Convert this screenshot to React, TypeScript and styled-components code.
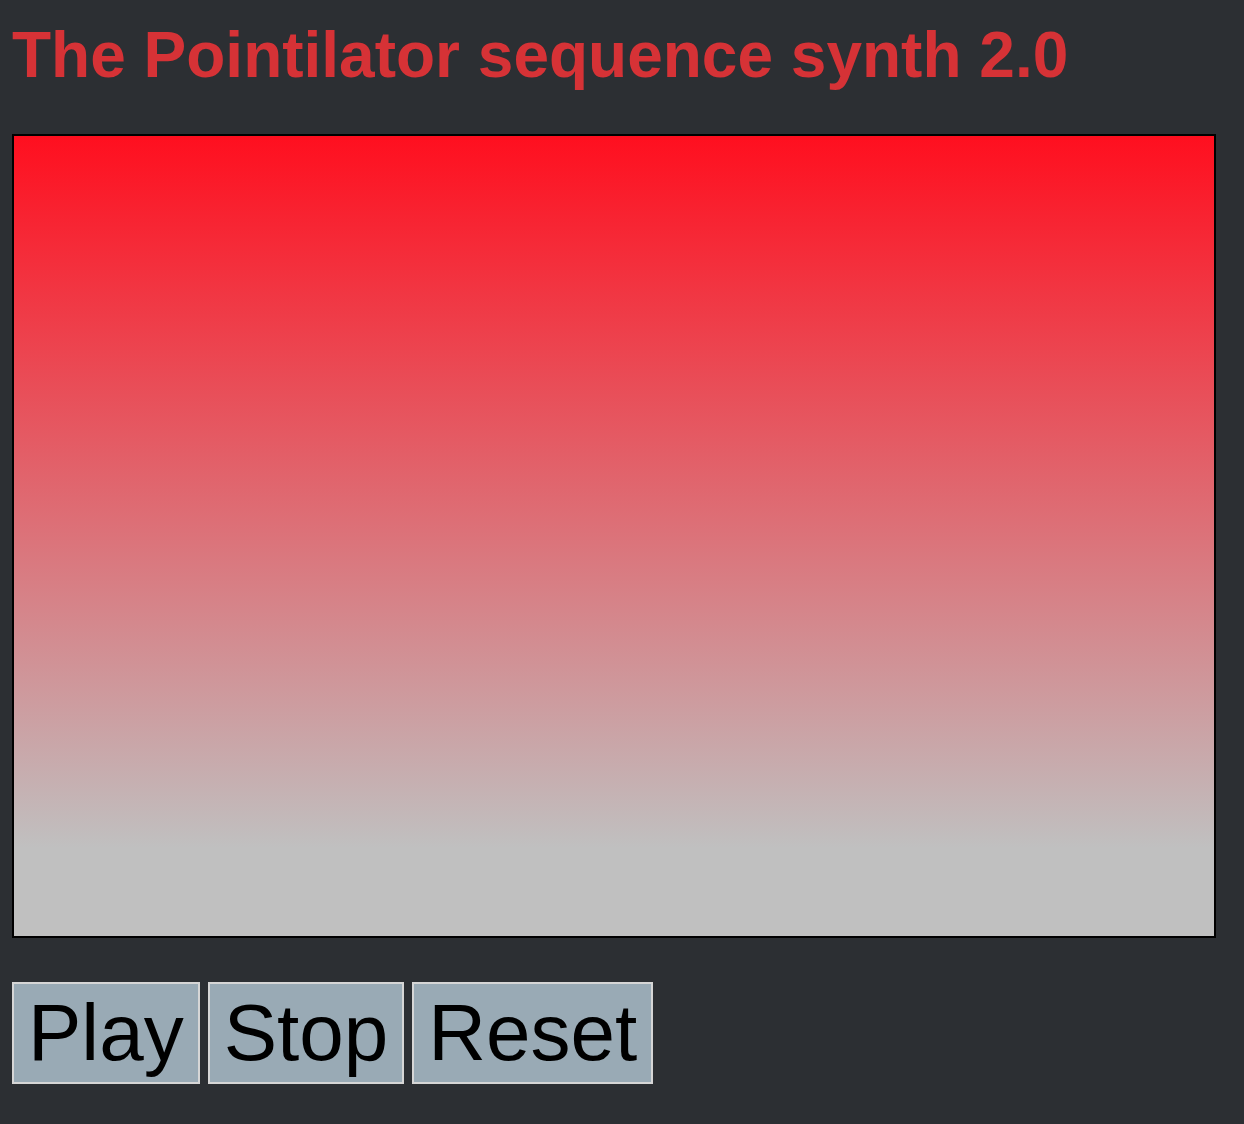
import styled, { createGlobalStyle } from 'styled-components'

const GlobalStyle = createGlobalStyle`
  body {
    margin: 0;
    background-color: #2c2f33;
    font-family: "Liberation Sans", Arial, Helvetica, sans-serif;
  }
`

const Pagina = styled.main`
  padding: 0 12px;
  min-height: 1124px;
  box-sizing: border-box;
`

const Titulo = styled.h1`
  margin: 19px 0 43px;
  font-size: 64px;
  line-height: 72px;
  font-weight: 700;
  color: #d63236;
  white-space: nowrap;
`

const Tela = styled.div`
  width: 1200px;
  height: 800px;
  border: 2px solid #000;
  background: linear-gradient(to bottom, #ff0f1f 0%, #c0c0c0 89%, #c0c0c0 100%);
  margin-bottom: 44px;
`

const Controles = styled.div`
  display: flex;
  gap: 8px;
`

const Botao = styled.button`
  height: 102px;
  box-sizing: border-box;
  padding: 3px 14px;
  border: 2px solid #d6d6d6;
  background-color: #99aab5;
  color: #000;
  font-family: "Liberation Sans", Arial, Helvetica, sans-serif;
  font-size: 80px;
  line-height: 92px;
  cursor: pointer;
`

const App = () => {
  const botoes = ['Play', 'Stop', 'Reset']
  return (
    <Pagina>
      <GlobalStyle />
      <Titulo>The Pointilator sequence synth 2.0</Titulo>
      <Tela />
      <Controles>
        {botoes.map((b) => (
          <Botao key={b}>{b}</Botao>
        ))}
      </Controles>
    </Pagina>
  )
}

export default App
